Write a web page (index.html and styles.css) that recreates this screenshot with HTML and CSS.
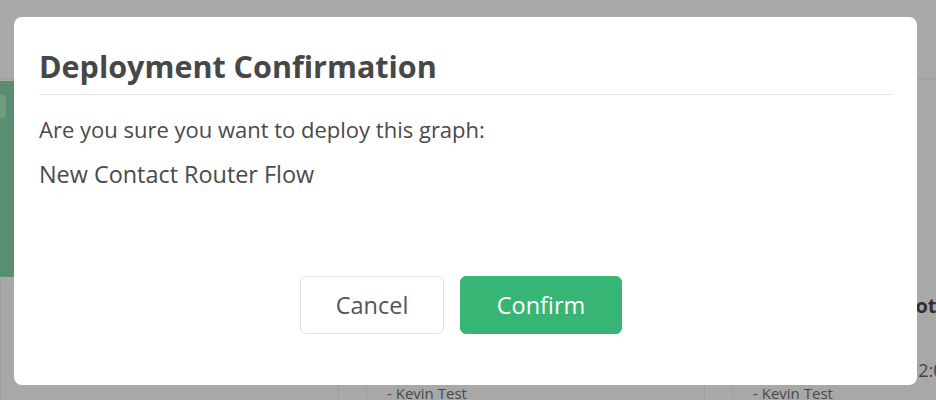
FILE: index.html
```html
<!DOCTYPE html>
<html lang="en">
<head>
<meta charset="utf-8">
<title>Deployment Confirmation</title>
<link rel="stylesheet" href="styles.css">
</head>
<body>
<div class="page">
  <header class="topbar"></header>
  <section class="hero-row">
    <div class="flow-card">
      <div class="flow-chip"></div>
    </div>
  </section>
  <section class="cards">
    <article class="card"></article>
    <article class="card">
      <h3 class="card-title">Inbound Lead Router Note</h3>
      <p class="card-sub">Contact flow</p>
      <p class="card-date">Created 6/14/2021 12:00 PM</p>
      <p class="card-author">- Kevin Test</p>
    </article>
    <article class="card">
      <h3 class="card-title">Contact Leads Note</h3>
      <p class="card-sub">Contact flow for new leads.</p>
      <p class="card-date">Created 6/14/2021 12:00 PM</p>
      <p class="card-author">- Kevin Test</p>
    </article>
  </section>
</div>

<div class="modal" role="dialog" aria-labelledby="modal-title">
  <h2 class="modal-title" id="modal-title">Deployment Confirmation</h2>
  <div class="modal-body">
    <p class="modal-text">Are you sure you want to deploy this graph:</p>
    <p class="modal-text graph-name">New Contact Router Flow</p>
  </div>
  <div class="modal-footer">
    <button class="btn btn-cancel" type="button">Cancel</button>
    <button class="btn btn-confirm" type="button">Confirm</button>
  </div>
</div>
</body>
</html>
```

FILE: styles.css
```css
* { box-sizing: border-box; }

html, body {
  margin: 0;
  padding: 0;
  width: 936px;
  height: 400px;
  overflow: hidden;
}

body {
  background: #a9a9a9;
  font-family: "Open Sans", "Noto Sans", sans-serif;
  position: relative;
}

.page {
  display: flex;
  flex-direction: column;
}

.topbar {
  height: 80px;
  border-bottom: 2px solid #a2a2a2;
}

.hero-row {
  margin-top: 1px;
  display: flex;
}

.flow-card {
  width: 320px;
  height: 196px;
  background: #5b8e70;
  padding-top: 14px;
}

.flow-chip {
  width: 6px;
  height: 23px;
  background: #6f9c82;
  border-radius: 0 4px 4px 0;
}

.cards {
  margin-top: 1px;
  display: grid;
  grid-template-columns: 339px 339px 339px;
  column-gap: 27px;
}

.card {
  height: 130px;
  background: #a8a8a8;
  border-left: 1px solid #9f9f9f;
  border-right: 1px solid #9f9f9f;
  padding: 14px 20px 0;
  color: #3a3a3a;
  white-space: nowrap;
  overflow: hidden;
}

.card-title {
  margin: 0;
  font-size: 20px;
  line-height: 27px;
  font-weight: 700;
  color: #2f2f2f;
}

.card-sub {
  margin: 0;
  font-size: 13px;
  line-height: 18px;
  color: #444;
}

.card-date {
  margin: 21px 0 0;
  font-size: 18px;
  line-height: 24px;
  word-spacing: -3px;
  color: #444;
}

.card-author {
  margin: 1px 0 0;
  font-size: 15px;
  line-height: 20px;
  color: #4a4a4a;
}

/* modal */
.modal {
  position: absolute;
  left: 14px;
  top: 17px;
  width: 903px;
  height: 368px;
  background: #ffffff;
  border-radius: 8px;
  padding: 30px 25px 0;
  display: flex;
  flex-direction: column;
  color: #4a4a4a;
}

.modal-title {
  margin: 0;
  padding-bottom: 9px;
  border-bottom: 1px solid #e4e4e4;
  font-size: 30.5px;
  line-height: 38px;
  font-weight: 700;
  color: #474747;
}

.modal-body {
  padding-top: 20px;
  display: flex;
  flex-direction: column;
  gap: 17px;
}

.modal-text {
  margin: 0;
  font-size: 22px;
  line-height: 28px;
  color: #4a4a4a;
}

.graph-name {
  font-size: 23.4px;
}

.modal-footer {
  margin-top: 88px;
  display: flex;
  justify-content: center;
  gap: 16px;
  padding-right: 9px;
}

.btn {
  height: 58px;
  border-radius: 6px;
  font-family: "Open Sans", "Noto Sans", sans-serif;
  font-size: 23.5px;
  padding: 0;
  display: flex;
  align-items: center;
  justify-content: center;
  cursor: pointer;
}

.btn-cancel {
  width: 144px;
  background: #ffffff;
  border: 1px solid #e2e2e2;
  color: #555555;
}

.btn-confirm {
  width: 162px;
  background: #37b574;
  border: 1px solid #37b574;
  color: #ffffff;
}
```
